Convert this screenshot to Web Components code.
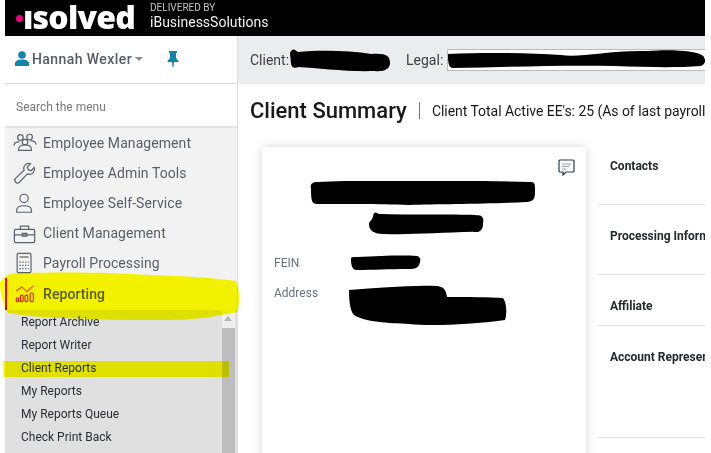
<!DOCTYPE html>
<html>
<head>
<meta charset="utf-8">
<title>Client Summary</title>
<style>
    html, body { margin: 0; height: 100%; background: #fff; overflow: hidden; }
    body { font-family: Roboto, "Liberation Sans", sans-serif; }
</style>
</head>
<body>
<app-shell>
    <top-bar slot="top"></top-bar>
    <side-nav slot="side">
        <nav-item icon="people">Employee Management</nav-item>
        <nav-item icon="wrench">Employee Admin Tools</nav-item>
        <nav-item icon="person">Employee Self-Service</nav-item>
        <nav-item icon="case">Client Management</nav-item>
        <nav-item icon="calc">Payroll Processing</nav-item>
        <nav-item icon="chart" active>Reporting</nav-item>
        <sub-menu>
            <sub-item>Report Archive</sub-item>
            <sub-item>Report Writer</sub-item>
            <sub-item>Client Reports</sub-item>
            <sub-item>My Reports</sub-item>
            <sub-item>My Reports Queue</sub-item>
            <sub-item>Check Print Back</sub-item>
        </sub-menu>
    </side-nav>
    <client-bar slot="main"></client-bar>
    <page-title slot="main"></page-title>
    <summary-body slot="main">
        <summary-card></summary-card>
        <info-list>
            <info-row h="70">Contacts</info-row>
            <info-row h="70">Processing Information</info-row>
            <info-row h="51">Affiliate</info-row>
            <info-row h="112">Account Representative</info-row>
        </info-list>
    </summary-body>
    <marker-stroke slot="over"></marker-stroke>
</app-shell>

<script>
const ICONS = {
    people: `<circle cx="8" cy="6" r="3"/><circle cx="18" cy="5.5" r="3"/><circle cx="13" cy="11" r="3"/><path d="M1 15c0-3 3-5 6-4M25 14c0-3-3-5-6-4M6 20v-1c0-3 3-5 7-5s7 2 7 5v1z"/>`,
    wrench: `<path d="M3 22c-1.500-1.500-1.500-3 0-4.500L12 9c-1-3 0-5 2-6.500 1.500-1 3.500-1.200 5-.5l-3.500 3.500 1 3 3 1L23 6c.7 2 .2 4-1 5.500-1.700 1.800-4 2.300-6.500 1.500L7 22c-1.300 1.300-2.700 1.300-4 0z"/>`,
    person: `<circle cx="12" cy="7" r="4.500"/><path d="M4 22v-2c0-3 3-5 8-5s8 2 8 5v2z"/>`,
    case: `<path d="M3 8h19a1.500 1.500 0 0 1 1.500 1.500V21a1.500 1.500 0 0 1-1.500 1.500H3A1.500 1.500 0 0 1 1.500 21V9.500A1.500 1.500 0 0 1 3 8zM8 8V4.500h9V8M1.500 14h22M10 12.500h5v3h-5z"/>`,
    calc: `<rect x="4.500" y="1.500" width="15" height="21" rx="1.500"/><path d="M7 5.500h10"/><path stroke-dasharray="1.500 1.500" d="M7 11h10M7 14.500h10M7 18h10"/>`,
    chart: `<path stroke="#e8412a" stroke-width="1.100" d="M3.300 8.700L9.500 4.400L15 9.500L22 3.300"/><g stroke="#e6004c" stroke-width="1.100"><rect x="3.500" y="16" width="2.500" height="4.500" rx="1.200"/><rect x="8" y="13" width="3" height="7.500" rx="1.400"/><rect x="13" y="13" width="3" height="7.500" rx="1.400"/><rect x="18.500" y="11" width="3.500" height="9.500" rx="1.500"/></g>`
};

const SCRIBBLES = {
    name: "M2 8C1 3 3 1 9 1C30 0 60 -1 90 0C130 -1 180 0 222 1C226 1 226 4 226 8C226 17 226 20 218 21C180 23 130 23 100 24C70 23 30 23 8 23C3 23 2 20 2 8Z",
    sub: "M4 4C5 -1 7 0 10 2C40 3 80 2 108 3C114 3 115 6 114 11C114 18 110 20 104 19C70 20 40 22 14 21C4 21 0 17 0 12C0 9 3 8 4 4Z",
    fein: "M0 4C0 2 2 2 6 2C30 1 50 0 66 1C70 2 70 6 68 10C66 14 62 14 56 14C40 14 20 15 6 15C1 15 0 10 0 4Z",
    addr: "M0 5C30 3 60 0 88 1C96 2 97 6 98 12C120 12 140 12 154 13C158 18 158 30 156 35C120 40 80 41 60 39C40 38 15 37 5 30C1 26 0 15 0 5Z",
    client: "M1 4C3 -1 6 0 9 3C30 1 60 1 85 5C100 4 104 7 104 14C104 20 98 23 88 22C60 23 30 19 10 18C5 20 2 18 2 14Z",
    legal: "M0 4C60 2 120 3 170 5C200 8 240 0 300 1C340 -1 375 1 384 6C388 10 388 14 380 16C340 18 300 17 250 16C170 15 90 17 6 18C0 17 0 10 0 4Z"
};

function component(name, markup) {
    customElements.define(name, class extends HTMLElement {
        constructor() {
            super();
            this.attachShadow({mode: 'open'});
            this.shadowRoot.innerHTML = typeof markup === "function" ? markup(this) : markup;
        }
    });
}

// black redaction marks, drawn on top of the text they hide
customElements.define("redact-mark", class extends HTMLElement {
    constructor() {
        super();
        this.attachShadow({mode: 'open'});
        const shape = this.getAttribute("shape");
        const w = this.getAttribute("w");
        const h = this.getAttribute("h");
        const box = { name: "226 24", sub: "115 22", fein: "70 15", addr: "158 41", client: "104 23", legal: "388 18" }[shape];
        this.shadowRoot.innerHTML = `
            <style>:host { display: block; width: ${w}px; height: ${h}px; } svg { display: block; width: 100%; height: 100%; }</style>
            <svg viewBox="0 0 ${box}" preserveAspectRatio="none"><path d="${SCRIBBLES[shape]}" fill="#000"/></svg>`;
    }
});

component("app-shell", `
    <style>
        :host { display: block; position: relative; width: 711px; height: 453px; overflow: hidden; }
        .frame { display: flex; flex-direction: column; width: 700px; height: 453px; margin-left: 5px; }
        .cols { display: flex; flex: 1; min-height: 0; }
        .main { flex: 1; min-width: 0; display: flex; flex-direction: column; }
    </style>
    <div class="frame">
        <slot name="top"></slot>
        <div class="cols">
            <slot name="side"></slot>
            <div class="main"><slot name="main"></slot></div>
        </div>
    </div>
    <slot name="over"></slot>`);

component("top-bar", `
    <style>
        :host { display: flex; align-items: center; height: 36px; background: #000; color: #fff; flex: none; }
        .dot { width: 7px; height: 7px; border-radius: 50%; background: #f0047f; margin-left: 11px; margin-top: 1px; flex: none; }
        .logo { font: 800 32px/36px "Open Sans", "Liberation Sans", sans-serif; letter-spacing: -.8px; width: 120px; flex: none; white-space: nowrap; position: relative; top: -1px; }
        .logo sup { position: absolute; left: 116px; top: -11px; font: 400 5px/8px Roboto, sans-serif; letter-spacing: 0; color: #bbb; }
        .by { margin-left: 7px; display: flex; flex-direction: column; margin-top: -4px; }
        .by small { font: 400 10px/11px Roboto, sans-serif; color: #c4c4c4; }
        .by b { font: 400 14px/16px Roboto, sans-serif; color: #f2f2f2; margin-top: 1px; }
    </style>
    <span class="dot"></span><span class="logo">ısolved<sup>™</sup></span>
    <div class="by"><small>DELIVERED BY</small><b>iBusinessSolutions</b></div>`);

component("side-nav", `
    <style>
        :host { display: flex; flex-direction: column; width: 233px; flex: none; box-sizing: border-box; border-right: 1px solid #dedede; background: #fff; height: 417px; }
        .user { display: flex; align-items: center; height: 48px; flex: none; padding: 0 0 2px 10px; box-sizing: border-box; border-bottom: 1px solid #dedede; color: #545b66; font: 500 14px Roboto, sans-serif; letter-spacing: .42px; }
        .user svg.u { margin-right: 3px; }
        .caret { width: 0; height: 0; border: 4px solid transparent; border-top-color: #8a8a8a; border-bottom: 0; margin-left: 3px; }
        .pin { margin-left: 24px; }
        .search { height: 44px; flex: none; box-sizing: border-box; padding: 3px 0 0 11px; display: flex; align-items: center; font: 400 12px Roboto, sans-serif; color: #77797d; border-bottom: 2px solid #e4e4e4; }
        .menu { flex: 1; min-height: 0; background: #f2f2f2; overflow: hidden; }
    </style>
    <div class="user">
        <svg class="u" width="14" height="16" viewBox="0 0 14 16"><circle cx="7" cy="4" r="3.800" fill="#1385a8"/><path d="M0 15v-2.500C0 10 3 8.500 7 8.500s7 1.500 7 4V15z" fill="#1385a8"/></svg>
        Hannah Wexler<span class="caret"></span>
        <svg class="pin" width="12" height="16" viewBox="0 0 12 16"><path d="M2 0h8v1.500L9 2.500V7l2.500 3V11H7l-.5 5h-1L5 11H.5v-1L3 7V2.500L2 1.500z" fill="#1385a8"/></svg>
    </div>
    <div class="search">Search the menu</div>
    <div class="menu"><slot></slot></div>`);

component("nav-item", el => `
    <style>
        :host { display: flex; align-items: center; height: 30px; box-sizing: border-box; padding-left: 8px; font: 400 14px Roboto, sans-serif; color: #595f68; letter-spacing: .07px; }
        :host([active]) { border-left: 2px solid #e6002e; padding-left: 6px; height: 32px; color: #5a5a00; font-weight: 500; }
        svg { width: 24px; height: 24px; margin-right: 6px; fill: none; stroke: #5c636c; stroke-width: 1.300; flex: none; }
    </style>
    <svg viewBox="0 0 26 24">${ICONS[el.getAttribute("icon")]}</svg><slot></slot>`);

component("sub-menu", `
    <style>
        :host { display: block; position: relative; background: #e0e0e0; height: 143px; box-sizing: border-box; }
        .bar { position: absolute; right: 2px; top: 0; bottom: 0; width: 13px; background: #efefef; }
        .bar i { position: absolute; left: 2px; top: 6px; width: 0; height: 0; border: 4px solid transparent; border-bottom: 5px solid #b5b5b5; border-top: 0; }
        .bar b { position: absolute; left: 0; right: 0; top: 18px; bottom: 0; background: #bdbdbd; }
    </style>
    <slot></slot>
    <div class="bar"><i></i><b></b></div>`);

component("sub-item", `
    <style>
        :host { display: flex; align-items: center; height: 23px; padding-left: 16px; font: 400 12px Roboto, sans-serif; color: #2a2d33; }
    </style>
    <slot></slot>`);

component("client-bar", `
    <style>
        :host { display: flex; align-items: center; height: 48px; flex: none; background: #ebecee; padding-left: 12px; font: 400 14px Roboto, sans-serif; color: #3a3f46; overflow: hidden; position: relative; }
        .legal { margin-left: 16px; }
        .gap { width: 101px; height: 23px; position: relative; margin-left: 0; }
        .gap2 { flex: 1; position: relative; height: 20px; border: 1px solid #bbb; border-right: 0; margin-left: 4px; background: #fff; }
        redact-mark { position: absolute; left: 0; top: 0; }
    </style>
    <span>Client:</span>
    <span class="gap"><redact-mark shape="client" w="101" h="23"></redact-mark></span>
    <span class="legal">Legal:</span>
    <span class="gap2"><redact-mark shape="legal" w="258" h="18"></redact-mark></span>`);

component("page-title", `
    <style>
        :host { display: flex; align-items: center; height: 52px; flex: none; padding-left: 12px; padding-top: 1px; box-sizing: border-box; color: #16181c; white-space: nowrap; overflow: hidden; }
        h1 { margin: 0; font: 500 22px Roboto, sans-serif; }
        i { width: 1px; height: 17px; background: #777; margin: 0 12px; flex: none; }
        span { font: 400 14px Roboto, sans-serif; letter-spacing: -.04px; }
    </style>
    <h1>Client Summary</h1><i></i><span>Client Total Active EE's: 25 (As of last payroll processed)</span>`);

component("summary-body", `
    <style>
        :host { display: flex; flex: 1; min-height: 0; padding: 11px 0 0 24px; overflow: hidden; }
    </style>
    <slot></slot>`);

component("summary-card", `
    <style>
        :host { display: block; position: relative; width: 324px; height: 330px; flex: none; background: #fff; border-radius: 4px; box-shadow: 0 0 10px rgba(0,0,0,.17); }
        .note { position: absolute; right: 11px; top: 12px; }
        .names { display: flex; flex-direction: column; align-items: center; padding-top: 34px; padding-left: 1px; gap: 7px; }
        .names redact-mark:first-child { margin-left: -5px; }
        .names redact-mark:last-child { margin-left: 3px; }
        .facts { display: grid; grid-template-columns: 77px auto; row-gap: 12px; padding: 19px 0 0 12px; font: 400 12px Roboto, sans-serif; color: #687180; }
        .facts span { height: 18px; line-height: 18px; }
        .facts redact-mark { margin-top: 1px; }
        .facts redact-mark:last-child { margin-left: -2px; }
    </style>
    <svg class="note" width="17" height="17" viewBox="0 0 17 17" fill="none"><path d="M2 1h13a1 1 0 0 1 1 1v10a1 1 0 0 1-1 1H8l-3 3v-3H2a1 1 0 0 1-1-1V2a1 1 0 0 1 1-1z" stroke="#2c3a4a" stroke-width="1.200"/><path d="M4 5h9M4 7.500h7M4 10h4" stroke="#9aa0a6" stroke-width="1.200"/></svg>
    <div class="names">
        <redact-mark shape="name" w="226" h="24"></redact-mark>
        <redact-mark shape="sub" w="115" h="23"></redact-mark>
    </div>
    <div class="facts">
        <span>FEIN</span><redact-mark shape="fein" w="70" h="15"></redact-mark>
        <span>Address</span><redact-mark shape="addr" w="158" h="41"></redact-mark>
    </div>`);

component("info-list", `
    <style>
        :host { display: block; margin: -12px 0 0 12px; flex: 1; min-width: 0; overflow: hidden; }
    </style>
    <slot></slot>`);

component("info-row", el => `
    <style>
        :host { display: block; height: ${el.getAttribute("h")}px; box-sizing: border-box; border-bottom: 1px solid #e2e2e2; padding: 24px 0 0 12px; font: 700 12px/14px Roboto, sans-serif; color: #23272e; white-space: nowrap; overflow: hidden; }
    </style>
    <slot></slot>`);

// the yellow highlighter strokes someone drew over the screenshot
component("marker-stroke", `
    <style>
        :host { position: absolute; left: 0; top: 0; width: 711px; height: 453px; pointer-events: none; mix-blend-mode: multiply; }
        svg { display: block; }
    </style>
    <svg width="711" height="453" viewBox="0 0 711 453">
        <path fill="#ffff00" d="M0 282C4 276 10 273 20 273C60 272 110 272 150 275C185 276 215 278 236 281C240 290 240 304 237 312C215 317 190 320 170 320C140 320 110 320 90 319C60 318 30 317 8 313C3 305 0 295 0 282Z"/>
        <rect fill="#ffff00" x="3" y="361" width="226" height="16"/>
    </svg>`);
</script>
</body>
</html>
